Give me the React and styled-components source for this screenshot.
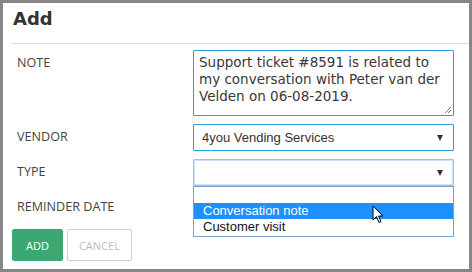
import React from "react";
import styled, { createGlobalStyle } from "styled-components";

const Global = createGlobalStyle`
  html, body { margin: 0; padding: 0; }
  body { background: #878787; width: 472px; height: 272px; overflow: hidden; }
`;

const Dialog = styled.div`
  margin: 3px 3px 3px 3px;
  width: 466px;
  height: 266px;
  background: #ffffff;
  position: relative;
  box-sizing: border-box;
`;

const Title = styled.h1`
  margin: 0;
  padding: 5px 0 0 10px;
  height: 35px;
  box-sizing: border-box;
  font-family: "DejaVu Sans", Verdana, sans-serif;
  font-weight: bold;
  font-size: 18px;
  line-height: 22px;
  color: #333;
`;

const Divider = styled.div`
  margin: 5px 0 0 9px;
  height: 1px;
  background: #dcdcdc;
`;

const Body = styled.div`
  padding: 6px 0 0 9px;
  display: grid;
  grid-template-columns: 181px 261px;
  row-gap: 8px;
`;

const Label = styled.div`
  padding-left: 5px;
  font-family: "Open Sans", "Segoe UI", sans-serif;
  font-size: 12.6px;
  color: #444;
  align-self: ${(p) => (p.$top ? "start" : "center")};
  padding-top: ${(p) => (p.$top ? "4px" : "0")};
  margin-top: ${(p) => (p.$top ? "0" : "-2px")};
`;

const TextArea = styled.div`
  position: relative;
  box-sizing: border-box;
  height: 66px;
  border: 1px solid #2a9fd8;
  border-radius: 1px;
  padding: 3px 10px 3px 5px;
  font-family: "DejaVu Sans", Verdana, sans-serif;
  font-size: 13.5px;
  line-height: 17px;
  color: #383838;
`;

const Grip = styled.svg`
  position: absolute;
  right: 1px;
  bottom: 1px;
`;

const SelectBox = styled.div`
  position: relative;
  box-sizing: border-box;
  height: 27px;
  border: 1px solid ${(p) => (p.$focus ? "#9dc0f3" : "#2a9fd8")};
  box-shadow: ${(p) => (p.$focus ? "inset 0 0 0 1px #cfe0fa" : "none")};
  border-radius: 1px;
  display: flex;
  align-items: center;
  padding: 0 8px;
  font-family: "Liberation Sans", Arial, sans-serif;
  font-size: 13px;
  color: #333;
  background: #fff;
`;

const Caret = styled.span`
  margin-left: auto;
  width: 0;
  height: 0;
  border-left: 3.5px solid transparent;
  border-right: 3.5px solid transparent;
  border-top: 6px solid #333;
  margin-right: 2px;
`;

const Options = styled.div`
  position: absolute;
  left: -1px;
  right: -1px;
  top: 26px;
  z-index: 2;
  background: #fff;
  border: 1px solid #7f9ed2;
  padding-bottom: 1px;
`;

const Option = styled.div`
  height: 16px;
  line-height: 16px;
  padding-left: 9px;
  font-family: "Liberation Sans", Arial, sans-serif;
  font-size: 13px;
  color: ${(p) => (p.$active ? "#fff" : "#111")};
  background: ${(p) => (p.$active ? "#1e90ff" : "transparent")};
  position: relative;
`;

const Cursor = styled.svg`
  position: absolute;
  left: 178px;
  top: 2px;
`;

const Actions = styled.div`
  grid-column: 1 / span 2;
  display: flex;
  gap: 4px;
`;

const Button = styled.button`
  box-sizing: border-box;
  height: 32px;
  padding: 0 ${(p) => (p.$primary ? "13px" : "11px")};
  border-radius: 2px;
  border: 1px solid ${(p) => (p.$primary ? "#3aa871" : "#cfcfcf")};
  background: ${(p) => (p.$primary ? "#3aa871" : "#fff")};
  color: ${(p) => (p.$primary ? "#fff" : "#bdbdbd")};
  font-family: "Open Sans", "Segoe UI", sans-serif;
  font-size: 11px;
  cursor: pointer;
`;

export default function App() {
  return (
    <>
      <Global />
      <Dialog>
        <Title>Add</Title>
        <Divider />
        <Body>
          <Label $top>NOTE</Label>
          <TextArea>
            Support ticket #8591 is related to my conversation with Peter van der Velden on 06-08-2019.
            <Grip width="8" height="8" viewBox="0 0 8 8">
              <path d="M7 1 L1 7 M7 4 L4 7" stroke="#777" strokeWidth="1" />
            </Grip>
          </TextArea>

          <Label>VENDOR</Label>
          <SelectBox>
            4you Vending Services
            <Caret />
          </SelectBox>

          <Label>TYPE</Label>
          <SelectBox $focus>
            <Caret />
            <Options>
              <Option>&nbsp;</Option>
              <Option $active>
                Conversation note
                <Cursor width="13" height="20" viewBox="0 0 13 20">
                  <path
                    d="M1 1 L1 15 L4.5 11.5 L7 17.5 L9 16.7 L6.6 11 L11 11 Z"
                    fill="#fff"
                    stroke="#000"
                    strokeWidth="1"
                    strokeLinejoin="miter"
                  />
                </Cursor>
              </Option>
              <Option>Customer visit</Option>
            </Options>
          </SelectBox>

          <Label>REMINDER DATE</Label>
          <SelectBox />

          <Actions>
            <Button $primary>ADD</Button>
            <Button>CANCEL</Button>
          </Actions>
        </Body>
      </Dialog>
    </>
  );
}
